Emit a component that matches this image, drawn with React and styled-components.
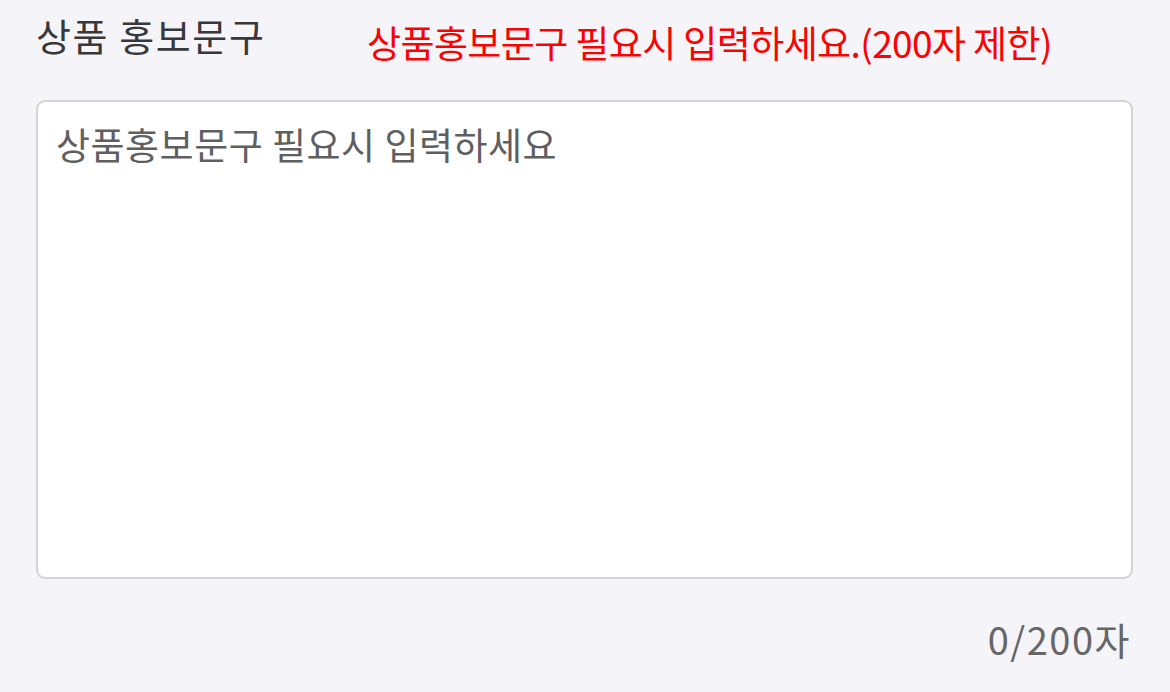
import React, { useState } from 'react'
import styled, { createGlobalStyle } from 'styled-components'

const GlobalStyle = createGlobalStyle`
  html, body {
    margin: 0;
    padding: 0;
    background: #f5f4f8;
  }
  body {
    font-family: "Noto Sans CJK KR", "Noto Sans", sans-serif;
  }
`

const MAX = 200

export const PromoText = () => {
    const [text, setText] = useState('')

    return (
        <Wrap>
            <Header>
                <Label>상품 홍보문구</Label>
                <Note>상품홍보문구 필요시 입력하세요.(200자 제한)</Note>
            </Header>
            <Area
                value={text}
                maxLength={MAX}
                placeholder="상품홍보문구 필요시 입력하세요"
                onChange={(e) => setText(e.target.value)}
            />
            <Counter>{text.length}/{MAX}자</Counter>
        </Wrap>
    )
}

const Wrap = styled.div`
    display: flex;
    flex-direction: column;
    padding: 10px 37px 0 36px;
    width: 1097px;
`

const Header = styled.div`
    display: flex;
    align-items: flex-start;
    height: 90px;
`

const Label = styled.div`
    font-size: 38px;
    line-height: 50px;
    color: #38383b;
    letter-spacing: 1.6px;
    width: 331px;
    flex-shrink: 0;
`

const Note = styled.div`
    margin-top: 7px;
    font-size: 37px;
    line-height: 50px;
    color: #ff0000;
    letter-spacing: -0.6px;
    white-space: nowrap;
`

const Area = styled.textarea`
    box-sizing: border-box;
    width: 1097px;
    height: 479px;
    border: 2.5px solid #d4d3d6;
    border-radius: 9px;
    background: #ffffff;
    padding: 17px 18px;
    font-family: inherit;
    font-size: 37px;
    line-height: 50px;
    letter-spacing: 0.5px;
    color: #333;
    resize: none;
    outline: none;

    &::placeholder {
        color: #5f5f62;
    }
`

const Counter = styled.div`
    align-self: flex-end;
    margin-top: 35px;
    margin-right: 2px;
    font-size: 38px;
    line-height: 50px;
    color: #666668;
    letter-spacing: 1.5px;
`

export default function App() {
    return (
        <>
            <GlobalStyle />
            <PromoText />
        </>
    )
}
